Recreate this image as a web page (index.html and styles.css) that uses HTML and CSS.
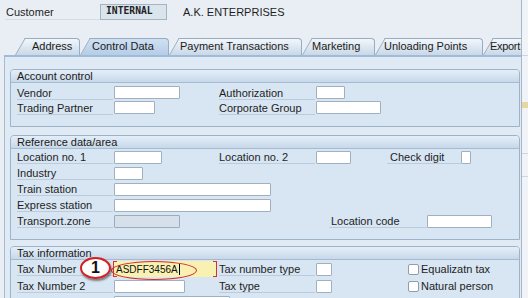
FILE: index.html
```html
<!DOCTYPE html>
<html>
<head>
<meta charset="utf-8">
<link rel="stylesheet" href="styles.css">
</head>
<body>
<div class="screen">
  <div class="main">
    <div class="hdr">
      <span class="hlabel">Customer</span>
      <span class="hbox">INTERNAL</span>
      <span class="hname">A.K. ENTERPRISES</span>
    </div>
    <div class="tabs">
      <div class="tab t-addr">Address</div>
      <div class="tab t-ctrl active">Control Data</div>
      <div class="tab t-pay">Payment Transactions</div>
      <div class="tab t-mkt">Marketing</div>
      <div class="tab t-unl">Unloading Points</div>
      <div class="tab t-exp">Export</div>
    </div>
    <div class="panel">
      <section class="group acc">
        <div class="gh">Account control</div>
        <div class="gb">
          <div class="row">
            <span class="lbl">Vendor</span><span class="inp w66"></span>
            <span class="lbl">Authorization</span><span class="inp w29"></span>
          </div>
          <div class="row">
            <span class="lbl">Trading Partner</span><span class="inp w41"></span>
            <span class="lbl">Corporate Group</span><span class="inp w65"></span>
          </div>
        </div>
      </section>
      <section class="group ref">
        <div class="gh">Reference data/area</div>
        <div class="gb">
          <div class="row">
            <span class="lbl">Location no. 1</span><span class="inp w48"></span>
            <span class="lbl">Location no. 2</span>
            <span class="cell">
              <span class="inp w35"></span>
              <span class="lbl lbl-check">Check digit</span><span class="inp w10"></span>
            </span>
          </div>
          <div class="row">
            <span class="lbl">Industry</span><span class="inp w29"></span>
          </div>
          <div class="row">
            <span class="lbl">Train station</span><span class="inp w157 span2"></span>
          </div>
          <div class="row">
            <span class="lbl">Express station</span><span class="inp w157 span2"></span>
          </div>
          <div class="row">
            <span class="lbl">Transport.zone</span><span class="inp off w66"></span>
            <span class="cell span2r">
              <span class="lbl lbl-loc">Location code</span><span class="inp w65"></span>
            </span>
          </div>
        </div>
      </section>
      <section class="group tax">
        <div class="gh">Tax information</div>
        <div class="gb">
          <div class="row tall marked">
            <span class="lbl">Tax Number</span>
            <span class="inp focus w103"><span class="val">ASDFF3456A</span><span class="caret"></span></span>
            <span class="lbl">Tax number type</span>
            <span class="cell">
              <span class="inp w16"></span>
              <span class="chk"><span class="box"></span>Equalizatn tax</span>
            </span>
            <span class="ring"></span>
            <span class="badge">1</span>
          </div>
          <div class="row">
            <span class="lbl">Tax Number 2</span><span class="inp w71"></span>
            <span class="lbl">Tax type</span>
            <span class="cell">
              <span class="inp w16"></span>
              <span class="chk"><span class="box"></span>Natural person</span>
            </span>
          </div>
          <div class="row">
            <span class="lbl blank"></span><span class="inp w116"></span>
          </div>
        </div>
      </section>
    </div>
  </div>
  <div class="side">
    <span class="sline s1"></span>
    <span class="smark"></span>
    <span class="sline s2"></span>
    <span class="sline s3"></span>
  </div>
</div>
</body>
</html>
```

FILE: styles.css
```css
* { box-sizing: border-box; margin: 0; padding: 0; }
html, body { width: 528px; height: 298px; overflow: hidden; }
body {
  background: #e9eef4;
  font: 11px "Liberation Sans", Arial, sans-serif;
  color: #1e1e1e;
}
.screen { display: flex; height: 298px; }
.main { width: 521px; flex: none; display: flex; flex-direction: column; overflow: hidden; }
.side {
  flex: 1;
  border-left: 1px solid #a8b6c5;
  background: #f0f3f7;
  display: flex;
  flex-direction: column;
}
.sline { display: block; height: 1px; background: #cdd6e0; }
.s1 { margin-top: 55px; }
.smark { display: block; height: 6px; margin-top: 46px; background: #e6d7a0; }
.s2 { margin-top: 45px; }
.s3 { margin-top: 22px; }

/* header */
.hdr { flex: none; display: flex; align-items: center; height: 16px; margin-top: 4px; }
.hlabel {
  width: 95px;
  margin-left: 5px;
  padding-left: 1px;
  height: 16px;
  line-height: 17px;
  border-bottom: 1px solid #d3dbe4;
}
.hbox {
  width: 67px;
  height: 16px;
  line-height: 14px;
  padding-left: 5px;
  background: #dae4ed;
  border: 1px solid #a6b4c2;
  font: bold 9.7px "DejaVu Sans Mono", monospace;
  color: #222;
}
.hname { margin-left: 16px; }

/* tabs */
.tabs { flex: none; display: flex; height: 17px; margin-top: 18px; padding-left: 15px; }
.tab {
  position: relative;
  z-index: 1;
  flex: none;
  height: 17px;
  line-height: 15px;
  margin-left: 11px;
  white-space: nowrap;
  border-top: 1px solid #97adc4;
  border-right: 1px solid #97adc4;
  border-top-right-radius: 4px;
  background: linear-gradient(#f2f6fa, #c9d8e7);
  color: #1c1c1c;
}
.tab::before {
  content: "";
  position: absolute;
  z-index: -1;
  left: -11px;
  top: -1px;
  bottom: 0;
  width: 14px;
  border-top: 1px solid #97adc4;
  border-left: 1px solid #97adc4;
  background: inherit;
  transform: skewX(-30deg);
  transform-origin: 0 100%;
}
.tab.active { z-index: 2; background: linear-gradient(#cfe0f2, #b6cde7); }
.t-addr { width: 54px; padding-left: 6px; }
.t-ctrl { width: 78px; padding-left: 1px; }
.t-pay { width: 122px; }
.t-mkt { width: 62px; text-indent: -1px; }
.t-unl { width: 97px; text-indent: -2px; }
.t-exp { width: 40px; text-indent: -4px; letter-spacing: -0.3px; }

/* panel */
.panel {
  flex: none;
  margin-left: 4px;
  border-left: 1px solid #a7bbd0;
  border-top: 2px solid #a0bbda;
  background: #e0eaf5;
  padding: 12px 1px 0 5px;
}
.group {
  border: 1px solid #9db3ca;
  border-radius: 4px 4px 0 0;
  background: #d8e5f2;
}
.acc { margin-bottom: 8px; }
.ref { margin-bottom: 6px; }
.gh {
  height: 13px;
  line-height: 13px;
  padding-left: 6px;
  background: linear-gradient(#e5eef7, #c7d8ea);
  border-bottom: 1px solid #a5bbd1;
  border-radius: 3px 3px 0 0;
  color: #1a1a1a;
}
.gb { padding-left: 6px; }
.acc .gb { padding-top: 2px; padding-bottom: 11px; }
.ref .gb { padding-bottom: 10px; }
.tax .gb { padding-top: 0; }

.row {
  display: grid;
  grid-template-columns: 97px 105px 97px 1fr;
  align-items: center;
  height: 16px;
}
.acc .row { height: 15px; }
.row.tall { height: 18px; }
.marked { position: relative; }

.lbl {
  width: 96px;
  height: 14px;
  line-height: 14px;
  border-bottom: 1px solid #bccbdb;
  white-space: nowrap;
}
.lbl.blank { border-bottom: 0; }
.cell { display: flex; align-items: center; }
.span2 { grid-column: 2 / 4; }
.span2r { grid-column: 3 / 5; }

.inp {
  display: block;
  height: 13px;
  background: #fff;
  border: 1px solid #a1b0c0;
  border-radius: 1px;
}
.inp.off { background: #d5e0eb; border-color: #9eabb9; }
.w10 { width: 10px; }
.w16 { width: 16px; }
.w29 { width: 29px; }
.w35 { width: 35px; }
.w41 { width: 41px; }
.w48 { width: 48px; }
.w65 { width: 65px; }
.w66 { width: 66px; }
.w71 { width: 71px; }
.w103 { width: 103px; }
.w116 { width: 116px; }
.w157 { width: 157px; }

.lbl-check { width: 74px; margin-left: 36px; padding-left: 3px; }
.lbl-loc { width: 98px; margin-left: 110px; padding-left: 2px; }

.inp.focus {
  position: relative;
  height: 16px;
  border: 0;
  background: #f9f1b2;
  display: flex;
  align-items: center;
  padding-left: 2px;
  font-size: 10px;
  color: #111;
}
.inp.focus::before,
.inp.focus::after {
  content: "";
  position: absolute;
  top: 0;
  bottom: 0;
  width: 3px;
  border-top: 1px solid #d83030;
  border-bottom: 1px solid #d83030;
}
.inp.focus::before { left: -1px; border-left: 1px solid #d83030; }
.inp.focus::after { right: 0; border-right: 1px solid #d83030; }
.caret { display: block; width: 1px; height: 11px; background: #000; margin-left: 1px; }

.chk { display: flex; align-items: center; margin-left: 76px; white-space: nowrap; }
.box {
  display: block;
  width: 11px;
  height: 11px;
  margin-right: 2px;
  background: #fff;
  border: 1px solid #8e9cab;
  border-radius: 2px;
}

.ring {
  position: absolute;
  left: 94px;
  top: 1px;
  width: 86px;
  height: 19px;
  border: 1.5px solid #d92626;
  border-radius: 50%;
}
.badge {
  position: absolute;
  left: 63px;
  top: -3px;
  width: 31px;
  height: 22px;
  border: 2px solid #d32020;
  border-radius: 50%;
  background: radial-gradient(circle at 40% 35%, #ffffff 55%, #e8e8e8);
  box-shadow: 1px 2px 2px rgba(0, 0, 0, 0.45);
  font: bold 16px/18px "Liberation Sans", Arial, sans-serif;
  color: #111;
  text-align: center;
}
```
